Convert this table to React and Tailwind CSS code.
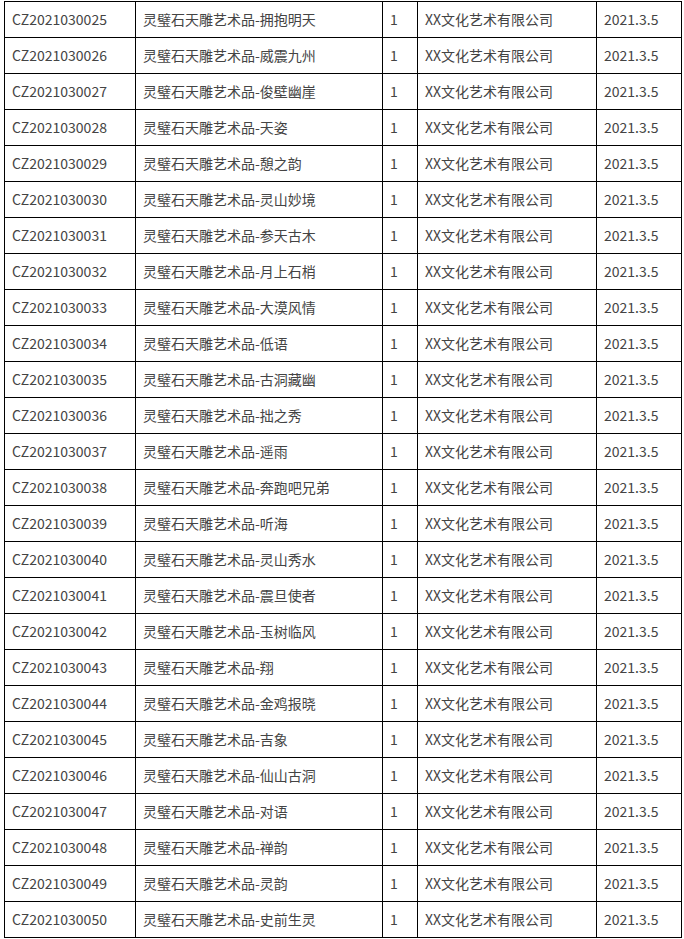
const NAMES = [
  "拥抱明天", "威震九州", "俊壁幽崖", "天姿", "憩之韵", "灵山妙境", "参天古木", "月上石梢",
  "大漠风情", "低语", "古洞藏幽", "拙之秀", "遥雨", "奔跑吧兄弟", "听海", "灵山秀水",
  "震旦使者", "玉树临风", "翔", "金鸡报晓", "吉象", "仙山古洞", "对语", "禅韵", "灵韵", "史前生灵",
];

const rows = NAMES.map((n, i) => ({
  code: "CZ20210300" + String(25 + i).padStart(2, "0"),
  name: "灵璧石天雕艺术品-" + n,
}));

export default function App() {
  return (
    <div className="bg-white w-[684px] h-[939px] overflow-hidden pt-px pl-1">
      <table
        className="table-fixed border-collapse text-[14px] text-[#444] w-[677px]"
        style={{ fontFamily: '"Noto Sans CJK SC", "Noto Sans", sans-serif' }}
      >
        <colgroup>
          <col className="w-[131px]" />
          <col className="w-[247px]" />
          <col className="w-[35px]" />
          <col className="w-[179px]" />
          <col className="w-[85px]" />
        </colgroup>
        <tbody>
          {rows.map((r) => (
            <tr key={r.code} className="h-[36px]">
              <td className="border border-black px-[7px] py-0 align-middle whitespace-nowrap">{r.code}</td>
              <td className="border border-black px-[7px] py-0 align-middle whitespace-nowrap">{r.name}</td>
              <td className="border border-black px-[7px] py-0 align-middle">1</td>
              <td className="border border-black px-[7px] py-0 align-middle whitespace-nowrap">XX文化艺术有限公司</td>
              <td className="border border-black px-[7px] py-0 align-middle whitespace-nowrap">2021.3.5</td>
            </tr>
          ))}
        </tbody>
      </table>
    </div>
  );
}
